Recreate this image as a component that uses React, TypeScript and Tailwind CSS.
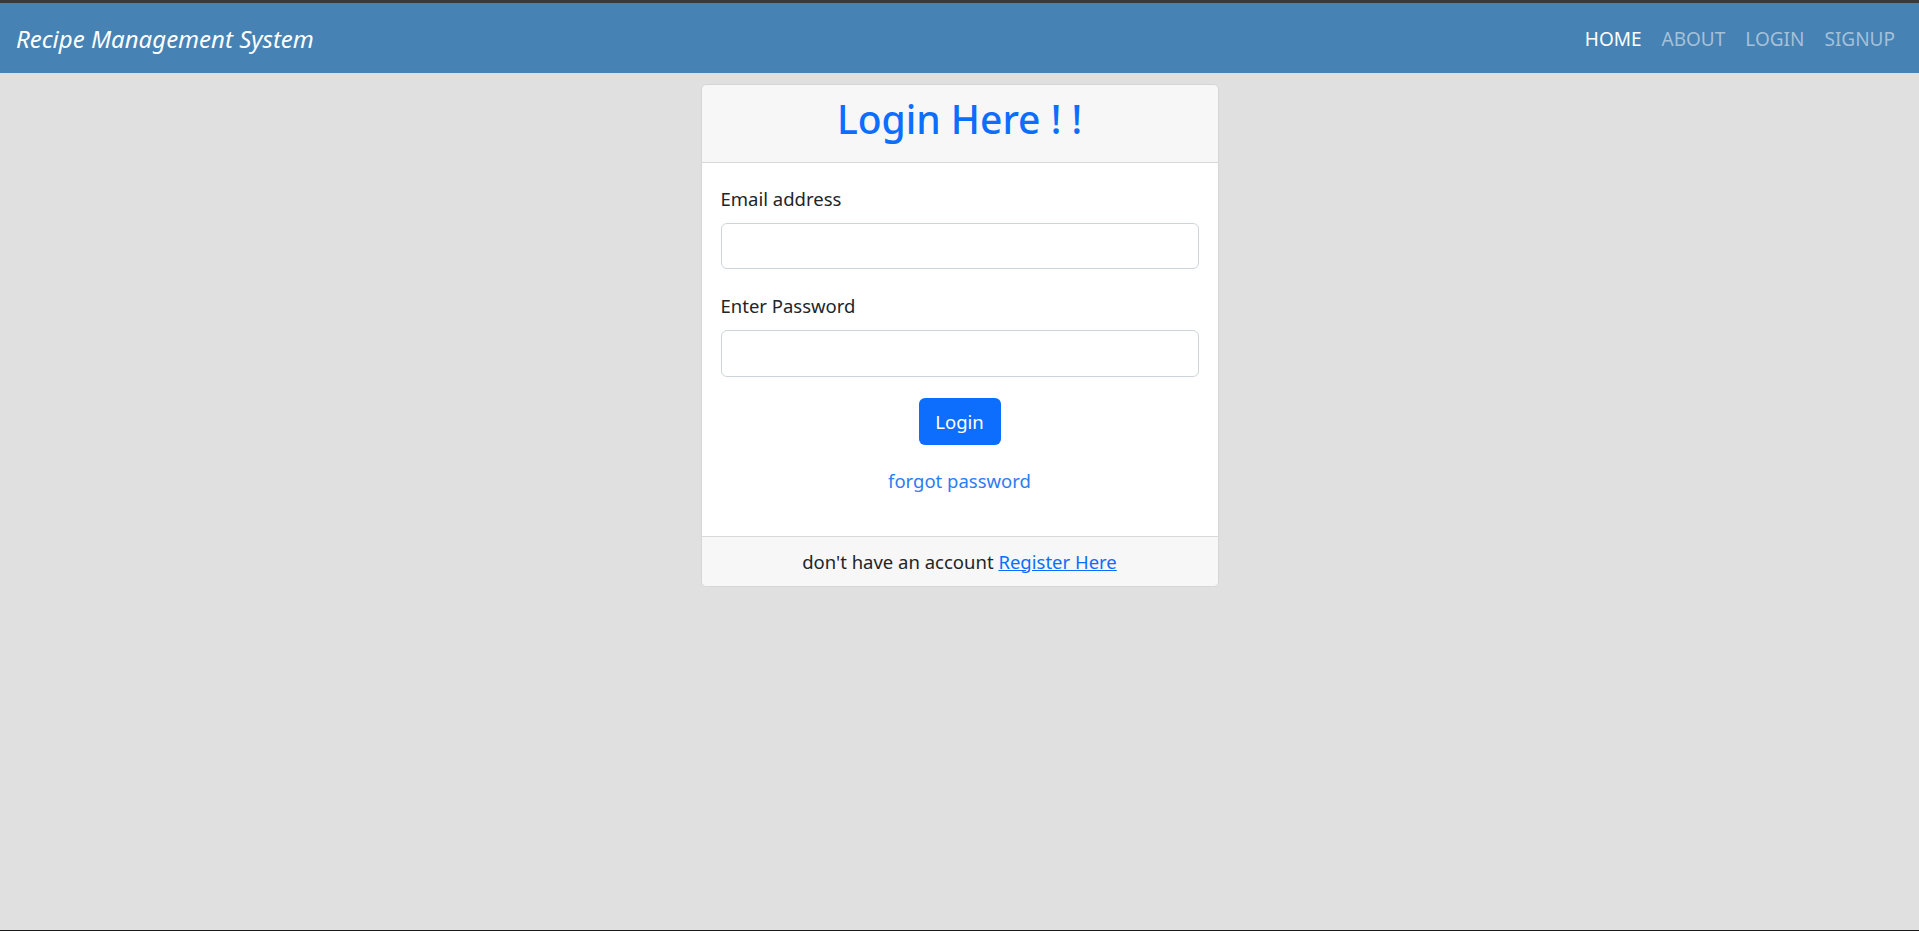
import React from 'react';

const font = { fontFamily: '"Noto Sans", "Open Sans", sans-serif' };

function Navbar() {
  return (
    <nav className="h-[70px] bg-[#4682b4] flex items-center justify-between pl-[16px] pr-[24px] pt-[2px]">
      <a className="text-white italic text-[24px] leading-none">Recipe Management System</a>
      <ul className="flex items-center gap-[20px] text-[19px] leading-none">
        <li className="text-white">HOME</li>
        <li className="text-[#a5c1da]">ABOUT</li>
        <li className="text-[#a5c1da]">LOGIN</li>
        <li className="text-[#a5c1da]">SIGNUP</li>
      </ul>
    </nav>
  );
}

function LoginCard() {
  return (
    <div className="w-[518px] bg-white border border-[#d6d6d6] rounded-[6px] overflow-hidden">
      {/* header */}
      <div className="h-[78px] bg-[#f7f7f7] border-b border-[#d9d9d9] flex justify-center pt-[14px]">
        <h1 className="text-[#0d6efd] text-[39px] leading-none font-medium">Login Here ! !</h1>
      </div>

      {/* body */}
      <form className="px-[19px] pt-[22px] pb-[41px] text-[18.5px] leading-[28px] text-[#212529]">
        <label className="block mb-[10px]">Email address</label>
        <input type="email" className="block w-full h-[46px] border border-[#ced4da] rounded-[6px] bg-white mb-[23px]" />

        <label className="block mb-[10px]">Enter Password</label>
        <input type="password" className="block w-full h-[47px] border border-[#ced4da] rounded-[6px] bg-white" />

        <div className="flex justify-center mt-[21px]">
          <button type="button" className="w-[82px] h-[47px] bg-[#0d6efd] text-white rounded-[6px] text-[18.5px]">
            Login
          </button>
        </div>

        <div className="text-center mt-[22px]">
          <a className="text-[#2c7cf5]">forgot password</a>
        </div>
      </form>

      {/* footer */}
      <div className="h-[50px] bg-[#f7f7f7] border-t border-[#d9d9d9] flex items-center justify-center text-[18.5px] leading-[28px] text-[#212529]">
        <span>
          don't have an account <a className="text-[#0d6efd] underline">Register Here</a>
        </span>
      </div>
    </div>
  );
}

export default function App() {
  return (
    <div style={font} className="h-[931px] flex flex-col bg-[#e0e0e0] border-t-[3px] border-t-[#343a40] border-b border-b-[#1a1a1a]">
      <Navbar />
      <main className="flex-1 flex justify-center items-start pt-[11px]">
        <LoginCard />
      </main>
    </div>
  );
}
